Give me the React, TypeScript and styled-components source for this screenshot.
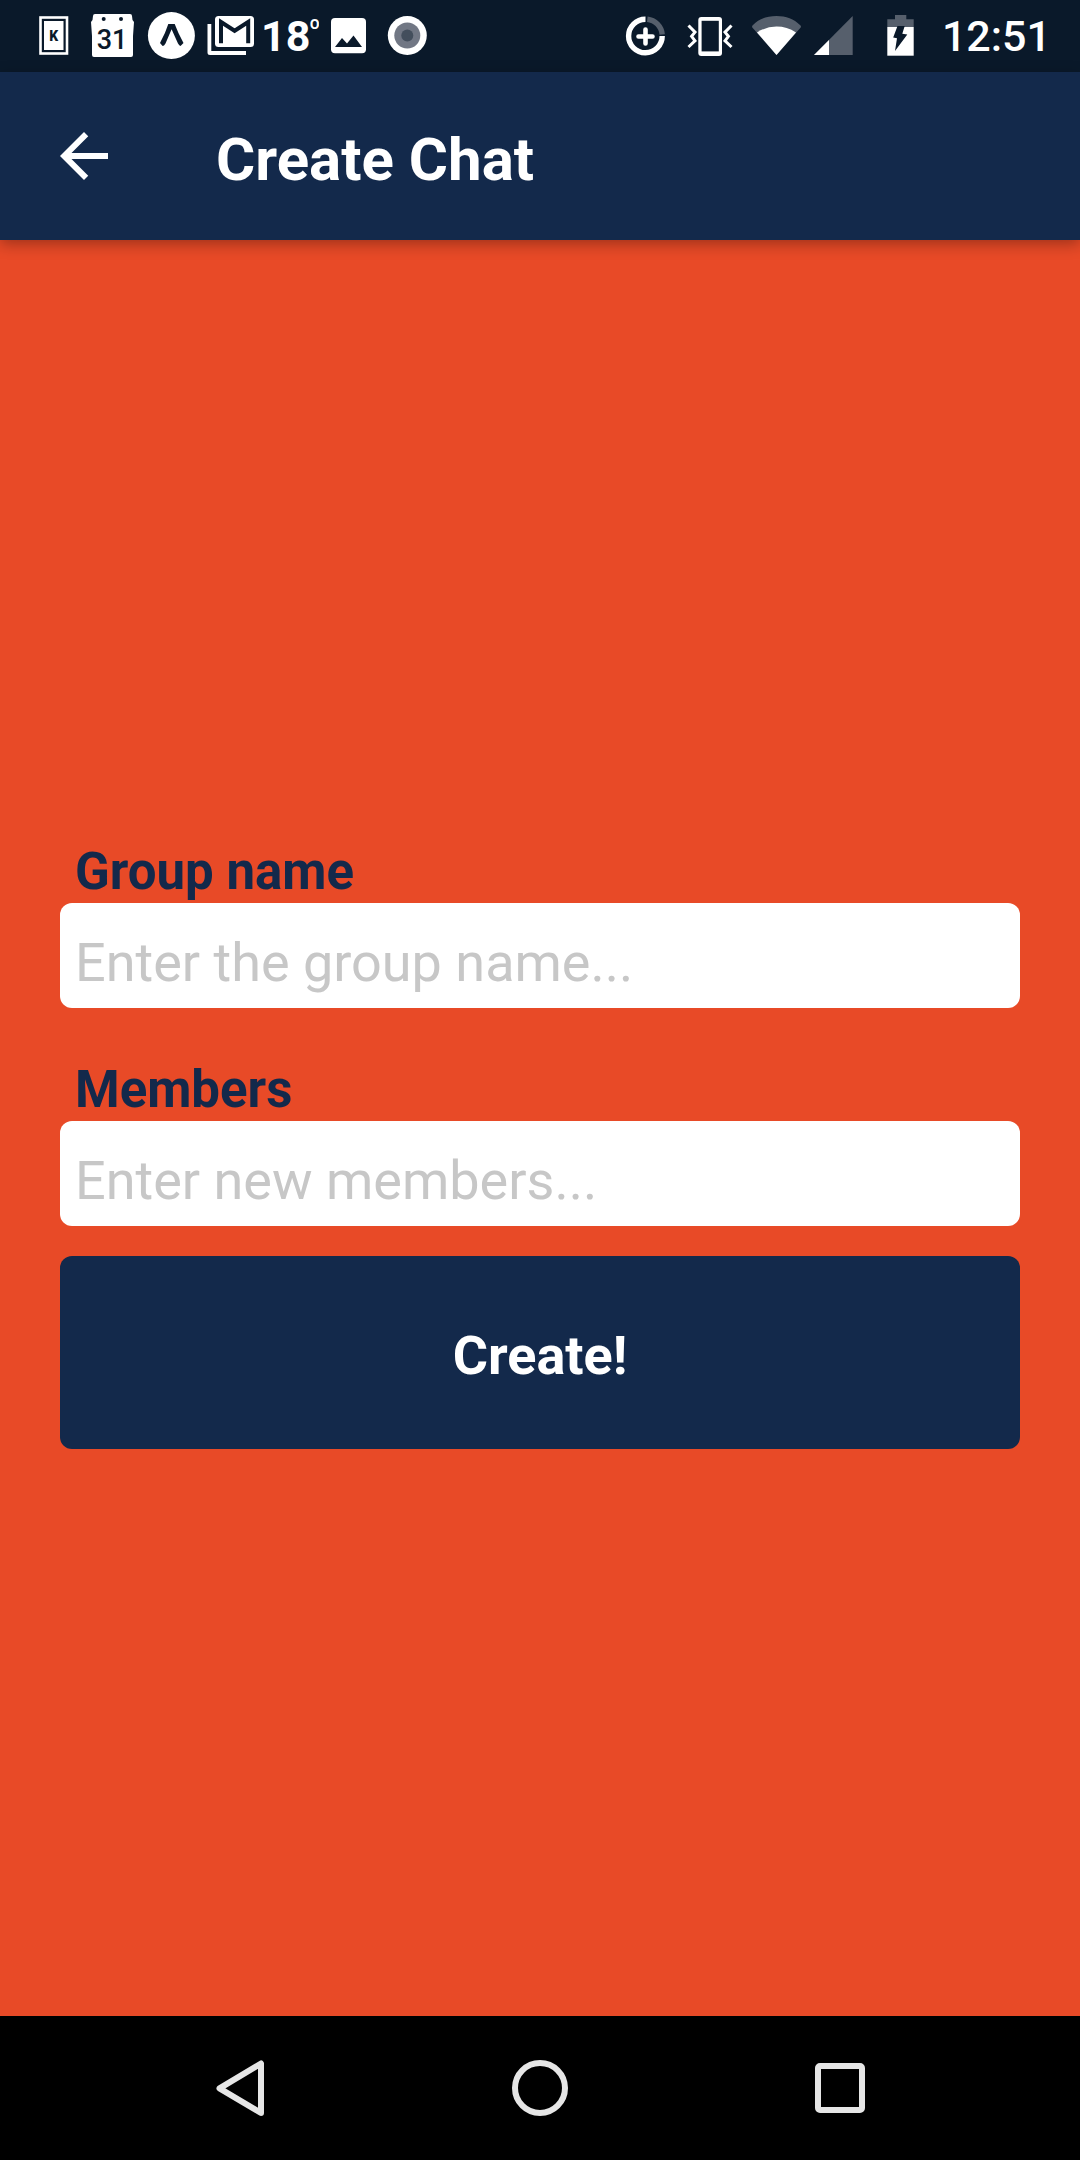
import React from "react";
import styled, { createGlobalStyle } from "styled-components";

const navy = "#13294b";
const orange = "#e84a27";
const statusInk = "#0a192a";
const faded = "#565f6c";

const GlobalStyle = createGlobalStyle`
  *, *::before, *::after { box-sizing: border-box; }
  body {
    margin: 0;
    background: ${orange};
    font-family: Roboto, "Noto Sans", sans-serif;
  }
  button, input { font: inherit; }
`;

const Screen = styled.div`
  display: flex;
  flex-direction: column;
  min-height: 100vh;
`;

const StatusBar = styled.div`
  display: flex;
  justify-content: space-between;
  height: 72px;
  padding: 0 29px 0 24px;
  background: ${statusInk};
  color: #fff;
`;

const StatusGroup = styled.div`
  display: flex;
  align-items: center;
`;

const StatusIcon = styled.svg<{ $width: number }>`
  flex: none;
  width: ${(p) => p.$width}px;
  height: 72px;
`;

const Clock = styled.time`
  font-size: 43px;
  line-height: 74px;
  font-weight: 500;
`;

const AppBar = styled.header`
  position: relative;
  display: flex;
  align-items: center;
  gap: 96px;
  height: 168px;
  padding: 0 48px;
  background: ${navy};
  color: #fff;
  box-shadow: 0 4px 14px rgba(0, 0, 0, 0.32);
`;

const BackButton = styled.button`
  display: flex;
  padding: 0;
  border: 0;
  background: none;
  color: inherit;
`;

const BackIcon = styled.svg`
  width: 72px;
  height: 72px;
`;

const Title = styled.h1`
  margin: 0;
  padding-top: 8px;
  font-size: 60px;
  line-height: 72px;
  font-weight: 700;
`;

const Main = styled.main`
  display: flex;
  flex: 1;
  flex-direction: column;
  justify-content: center;
  padding: 36px 60px 0;
  background: ${orange};
`;

const Form = styled.form`
  display: flex;
  flex-direction: column;
  gap: 30px;
`;

const Fields = styled.div`
  display: flex;
  flex-direction: column;
  gap: 53px;
`;

const Field = styled.div`
  display: flex;
  flex-direction: column;
`;

const Label = styled.label`
  padding: 0 15px 2px;
  color: ${navy};
  font-size: 51px;
  line-height: 58px;
  font-weight: 700;
`;

const TextInput = styled.input`
  width: 100%;
  height: 105px;
  padding: 28px 15px 14px;
  border: 0;
  border-radius: 12px;
  background: #fff;
  color: ${navy};
  font-size: 54px;
  line-height: 63px;

  &::placeholder {
    color: #c7c7c7;
    opacity: 1;
  }
`;

const SubmitButton = styled.button`
  padding: 68px 30px 62px;
  border: 0;
  border-radius: 12px;
  background: ${navy};
  color: #fff;
  font-size: 54px;
  line-height: 63px;
  font-weight: 700;
`;

const NavBar = styled.nav`
  display: flex;
  height: 144px;
  padding: 0 90px;
  background: #000;
`;

const NavButton = styled.button`
  display: flex;
  flex: 1;
  align-items: center;
  justify-content: center;
  padding: 0;
  border: 0;
  background: none;
`;

const NavIcon = styled.svg`
  width: 72px;
  height: 72px;
  fill: none;
  stroke: #e6e6e6;
  stroke-width: 6;
  stroke-linejoin: round;
`;

function Icon({ width, children }: { width: number; children: React.ReactNode }) {
  return (
    <StatusIcon $width={width} viewBox={`0 0 ${width} 72`} aria-hidden="true">
      {children}
    </StatusIcon>
  );
}

function Notifications() {
  return (
    <StatusGroup>
      <Icon width={59}>
        <rect x="16.5" y="17.5" width="26.5" height="36" fill="none" stroke="#fff" strokeWidth="2.6" />
        <rect x="20" y="21" width="19.5" height="29" fill="#fff" />
        <text x="29.7" y="40.5" fill={statusInk} fontSize="14" fontWeight="900" textAnchor="middle">K</text>
      </Icon>
      <Icon width={59}>
        <path d="M12 14H47Q49 14 49 16L49.5 20L51 22L50 36V55Q50 57 48 57H11Q9 57 9 55V36L8 22L9.5 20L10 16Q10 14 12 14Z" fill="#fff" />
        <circle cx="20.7" cy="19" r="2" fill={statusInk} />
        <circle cx="38" cy="19" r="2" fill={statusInk} />
        <text x="29" y="48.5" fill={statusInk} fontSize="27" fontWeight="500" textAnchor="middle">31</text>
      </Icon>
      <Icon width={59}>
        <circle cx="29.4" cy="35.6" r="23.5" fill="#fff" />
        <path d="M26.3 24H32.7Q36 33 41.5 43L38.5 46Q37.3 45.8 36 43.5L29.6 29.3L23.5 43.5Q22 46 20.6 46L18 43Q23.5 33 26.3 24Z" fill={statusInk} />
      </Icon>
      <Icon width={59}>
        <path d="M6.5 24H10.3V51H45V55H9Q6.5 55 6.5 52.5Z" fill="#fff" />
        <rect x="14" y="16" width="39" height="31" rx="3.5" fill="#fff" />
        <path d="M20 43.3V22L33.6 30.8L47.2 22V43.3" fill="none" stroke={statusInk} strokeWidth="4" />
      </Icon>
      <Icon width={59}>
        <text x="1" y="51" fill="#fff" fontSize="43" fontWeight="700">18</text>
        <text x="49" y="37" fill="#fff" fontSize="25" fontWeight="700">º</text>
      </Icon>
      <Icon width={59}>
        <rect x="12" y="18" width="35" height="35.3" rx="4" fill="#fff" />
        <path d="M16 47L23 38L28 43.5L34.5 35.5L43 47Z" fill={statusInk} />
      </Icon>
      <Icon width={59}>
        <circle cx="29.3" cy="35.5" r="19.5" fill="#fff" />
        <circle cx="29.3" cy="35.5" r="13" fill="#717784" />
        <circle cx="29.3" cy="35.5" r="6" fill="#434e5c" />
      </Icon>
    </StatusGroup>
  );
}

function SystemStatus() {
  return (
    <StatusGroup>
      <Icon width={64}>
        <path d="M31.5 19.2A16.8 16.8 0 1 0 48.2 36" fill="none" stroke="#fff" strokeWidth="5.4" />
        <path d="M33.3 19.2A16.8 16.8 0 0 1 48.2 34.4" fill="none" stroke={faded} strokeWidth="5.4" />
        <path d="M31.5 29.5V43.5M24.5 36.5H38.5" stroke="#fff" strokeWidth="4.6" strokeLinecap="round" />
      </Icon>
      <Icon width={64}>
        <rect x="20.3" y="17" width="23.7" height="39" rx="3" fill="#fff" />
        <rect x="23.6" y="20.8" width="17.2" height="30.6" fill={statusInk} />
        <path
          d="M10.5 25.5L17 32.2L13.6 36.3L17 40.8L10.5 47M53.5 25.5L47 32.2L50.4 36.3L47 40.8L53.5 47"
          fill="none"
          stroke="#fff"
          strokeWidth="3"
        />
      </Icon>
      <Icon width={68}>
        <path d="M34.5 55L10.3 27.5Q9.6 26 11 25C17 19 25 16 34.5 16S52 19 58 25Q59.5 26 58.7 27.5Z" fill={faded} />
        <path d="M34.5 55L15 32.4Q24 26.5 34.5 26.5T54 32.4Z" fill="#fff" />
      </Icon>
      <Icon width={48}>
        <path d="M4 55L42.7 16V55Z" fill={faded} />
        <path d="M4 55L19 40V55Z" fill="#fff" />
      </Icon>
      <Icon width={84}>
        <path d="M37 15H48.3V19.3H55.7V27H29.3V19.3H37Z" fill={faded} />
        <path d="M29.3 27H55.7V55.7H29.3Z" fill="#fff" />
        <path d="M39.5 26H46.7L44.3 33.8L49.3 34.5L37 51L39 38.3L35.2 37.6Z" fill={statusInk} />
      </Icon>
      <Clock>12:51</Clock>
    </StatusGroup>
  );
}

export default function App() {
  return (
    <>
      <GlobalStyle />
      <Screen>
        <StatusBar>
          <Notifications />
          <SystemStatus />
        </StatusBar>

        <AppBar>
          <BackButton type="button" aria-label="Back">
            <BackIcon viewBox="0 0 24 24" aria-hidden="true">
              <path d="M20 11H7.83l5.59-5.59L12 4l-8 8 8 8 1.41-1.41L7.83 13H20v-2z" fill="currentColor" />
            </BackIcon>
          </BackButton>
          <Title>Create Chat</Title>
        </AppBar>

        <Main>
          <Form onSubmit={(event) => event.preventDefault()}>
            <Fields>
              <Field>
                <Label htmlFor="group-name">Group name</Label>
                <TextInput id="group-name" type="text" placeholder="Enter the group name..." />
              </Field>
              <Field>
                <Label htmlFor="members">Members</Label>
                <TextInput id="members" type="text" placeholder="Enter new members..." />
              </Field>
            </Fields>
            <SubmitButton type="submit">Create!</SubmitButton>
          </Form>
        </Main>

        <NavBar aria-label="System navigation">
          <NavButton type="button" aria-label="Back">
            <NavIcon viewBox="0 0 72 72" aria-hidden="true">
              <path d="M15.5 36.3L57 11.5V61Z" />
            </NavIcon>
          </NavButton>
          <NavButton type="button" aria-label="Home">
            <NavIcon viewBox="0 0 72 72" aria-hidden="true">
              <circle cx="36" cy="36" r="25" />
            </NavIcon>
          </NavButton>
          <NavButton type="button" aria-label="Overview">
            <NavIcon viewBox="0 0 72 72" aria-hidden="true">
              <rect x="14" y="14" width="44" height="44" rx="2" />
            </NavIcon>
          </NavButton>
        </NavBar>
      </Screen>
    </>
  );
}
